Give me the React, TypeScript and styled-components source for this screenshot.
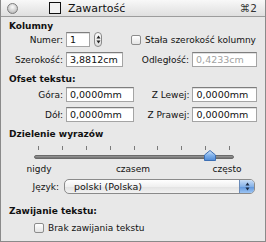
import React from 'react'
import styled, { createGlobalStyle } from 'styled-components'

const GlobalStyle = createGlobalStyle`
  html, body {
    margin: 0;
    padding: 0;
    background: #e8e8e8;
  }
  body {
    font-family: "DejaVu Sans", "Liberation Sans", sans-serif;
    font-size: 9px;
    color: #111;
  }
`

const Panel = styled.div`
  width: 266px;
  height: 242px;
  box-sizing: border-box;
  border: 1px solid #8a8a8a;
  border-top: none;
  background: #e8e8e8;
  overflow: hidden;
`

const TitleBar = styled.div`
  height: 16px;
  display: flex;
  align-items: center;
  background: linear-gradient(#f8f8f8, #dfdfdf);
  border-bottom: 1px solid #9c9c9c;
  padding: 0 8px 0 6px;
  font-size: 11px;
`

const CloseDot = styled.span`
  width: 11px;
  height: 11px;
  border-radius: 50%;
  box-sizing: border-box;
  border: 1px solid #7d7d7d;
  background: radial-gradient(circle at 50% 35%, #fafafa, #c4c4c4 70%, #9a9a9a);
`

const TitleBox = styled.span`
  width: 12px;
  height: 12px;
  box-sizing: border-box;
  border: 1px solid #111;
  background: #f2f2f2;
  margin-left: 31px;
`

const TitleText = styled.span`
  margin-left: 7px;
  flex: 1;
`

const Shortcut = styled.span`
  color: #333;
  font-size: 10.5px;
`

const Body = styled.div`
  padding: 3px 8px 0 8px;
  display: flex;
  flex-direction: column;
`

const Heading = styled.div<{ $top?: number }>`
  font-weight: bold;
  height: 12px;
  line-height: 12px;
  margin-top: ${(p) => p.$top ?? 0}px;
`

const Row = styled.div<{ $top?: number }>`
  display: flex;
  align-items: center;
  height: 15px;
  margin-top: ${(p) => p.$top ?? 0}px;
`

const Label = styled.span<{ $w: number }>`
  width: ${(p) => p.$w}px;
  text-align: right;
  flex-shrink: 0;
  white-space: nowrap;
`

const Field = styled.div<{ $w: number; $ml?: number; $dim?: boolean }>`
  width: ${(p) => p.$w}px;
  height: 15px;
  margin-left: ${(p) => p.$ml ?? 3}px;
  box-sizing: border-box;
  background: #fff;
  border: 1px solid #a4a4a4;
  border-top-color: #7e7e7e;
  box-shadow: inset 0 1px 0 #e0e0e0;
  padding: 0 3px;
  line-height: 13px;
  font-size: 9.5px;
  color: ${(p) => (p.$dim ? '#a2a2a2' : '#111')};
  white-space: nowrap;
  overflow: hidden;
`

const Stepper = styled.div`
  width: 8px;
  height: 15px;
  margin-left: 4px;
  box-sizing: border-box;
  border: 1px solid #8a8a8a;
  border-radius: 4px;
  background: linear-gradient(#fdfdfd, #dedede);
  display: flex;
  align-items: center;
  justify-content: center;
`

const Check = styled.span<{ $ml: number }>`
  width: 10px;
  height: 10px;
  margin-left: ${(p) => p.$ml}px;
  margin-right: 4px;
  box-sizing: border-box;
  border: 1px solid #8c8c8c;
  border-radius: 2px;
  background: linear-gradient(#ffffff, #e4e4e4);
  flex-shrink: 0;
`

const SliderBlock = styled.div`
  margin-top: 6px;
  margin-left: 25px;
  width: 200px;
  position: relative;
`

const Ticks = styled.div`
  display: flex;
  justify-content: space-between;
  margin: 0 4px 0 4px;
  height: 4px;
`

const Tick = styled.span`
  width: 1px;
  height: 4px;
  background: #7a7a7a;
`

const Track = styled.div`
  margin-top: 5px;
  height: 4px;
  border-radius: 2px;
  background: linear-gradient(#9a9a9a, #6f6f6f);
  border: 1px solid #6a6a6a;
  box-sizing: border-box;
`

const Thumb = styled.svg`
  position: absolute;
  left: 170px;
  top: 4px;
`

const ScaleLabels = styled.div`
  display: flex;
  justify-content: space-between;
  width: 248px;
  margin-top: 5px;
  height: 11px;
  line-height: 11px;
`

const ScaleLabel = styled.span`
  width: 60px;
  text-align: center;
`

const Select = styled.div`
  width: 191px;
  height: 15px;
  margin-left: 5px;
  box-sizing: border-box;
  border: 1px solid #8a8a8a;
  border-radius: 5px;
  background: linear-gradient(#ffffff, #f0f0f0 50%, #e2e2e2 51%, #f2f2f2);
  display: flex;
  align-items: center;
  overflow: hidden;
`

const SelectText = styled.span`
  flex: 1;
  padding-left: 9px;
  font-size: 9.5px;
`

const SelectArrows = styled.span`
  width: 14px;
  height: 100%;
  border-left: 1px solid #6a8bb8;
  background: linear-gradient(#c9def6, #86b2e8 50%, #5e95dc 51%, #9cc4f2);
  display: flex;
  align-items: center;
  justify-content: center;
`

const Arrows = ({ color = '#222' }: { color?: string }) => (
  <svg width="5" height="9" viewBox="0 0 5 9">
    <path d="M2.5 0.5 L4.5 3.5 L0.5 3.5 Z" fill={color} />
    <path d="M2.5 8.5 L4.5 5.5 L0.5 5.5 Z" fill={color} />
  </svg>
)

const App = () => {
  return (
    <>
      <GlobalStyle />
      <Panel>
        <TitleBar>
          <CloseDot />
          <TitleBox />
          <TitleText>Zawartość</TitleText>
          <Shortcut>⌘2</Shortcut>
        </TitleBar>
        <Body>
          <Heading>Kolumny</Heading>
          <Row>
            <Label $w={54}>Numer:</Label>
            <Field $w={24}>1</Field>
            <Stepper>
              <Arrows />
            </Stepper>
            <Check $ml={29} />
            <span>Stała szerokość kolumny</span>
          </Row>
          <Row $top={5}>
            <Label $w={54}>Szerokość:</Label>
            <Field $w={58}>3,8812cm</Field>
            <Label $w={66}>Odległość:</Label>
            <Field $w={66} $dim>
              0,4233cm
            </Field>
          </Row>
          <Heading $top={6}>Ofset tekstu:</Heading>
          <Row $top={2}>
            <Label $w={54}>Góra:</Label>
            <Field $w={69}>0,0000mm</Field>
            <Label $w={55}>Z Lewej:</Label>
            <Field $w={65}>0,0000mm</Field>
          </Row>
          <Row $top={5}>
            <Label $w={54}>Dół:</Label>
            <Field $w={69}>0,0000mm</Field>
            <Label $w={55}>Z Prawej:</Label>
            <Field $w={65}>0,0000mm</Field>
          </Row>
          <Heading $top={6}>Dzielenie wyrazów</Heading>
          <SliderBlock>
            <Ticks>
              {Array.from({ length: 9 }).map((_, i) => (
                <Tick key={i} />
              ))}
            </Ticks>
            <Track />
            <Thumb width="12" height="11" viewBox="0 0 12 11">
              <defs>
                <linearGradient id="thumb" x1="0" y1="0" x2="0" y2="1">
                  <stop offset="0" stopColor="#d6e8fb" />
                  <stop offset="0.5" stopColor="#7fb0ea" />
                  <stop offset="1" stopColor="#4f8ad6" />
                </linearGradient>
              </defs>
              <path
                d="M6 0.5 L11.5 5 L11.5 10.5 L0.5 10.5 L0.5 5 Z"
                fill="url(#thumb)"
                stroke="#3d6fb3"
              />
            </Thumb>
          </SliderBlock>
          <ScaleLabels>
            <ScaleLabel>nigdy</ScaleLabel>
            <ScaleLabel>czasem</ScaleLabel>
            <ScaleLabel>często</ScaleLabel>
          </ScaleLabels>
          <Row $top={4}>
            <Label $w={50}>Język:</Label>
            <Select>
              <SelectText>polski (Polska)</SelectText>
              <SelectArrows>
                <Arrows color="#1a2a44" />
              </SelectArrows>
            </Select>
          </Row>
          <Heading $top={11}>Zawijanie tekstu:</Heading>
          <Row $top={3}>
            <Check $ml={25} />
            <span>Brak zawijania tekstu</span>
          </Row>
        </Body>
      </Panel>
    </>
  )
}

export default App
